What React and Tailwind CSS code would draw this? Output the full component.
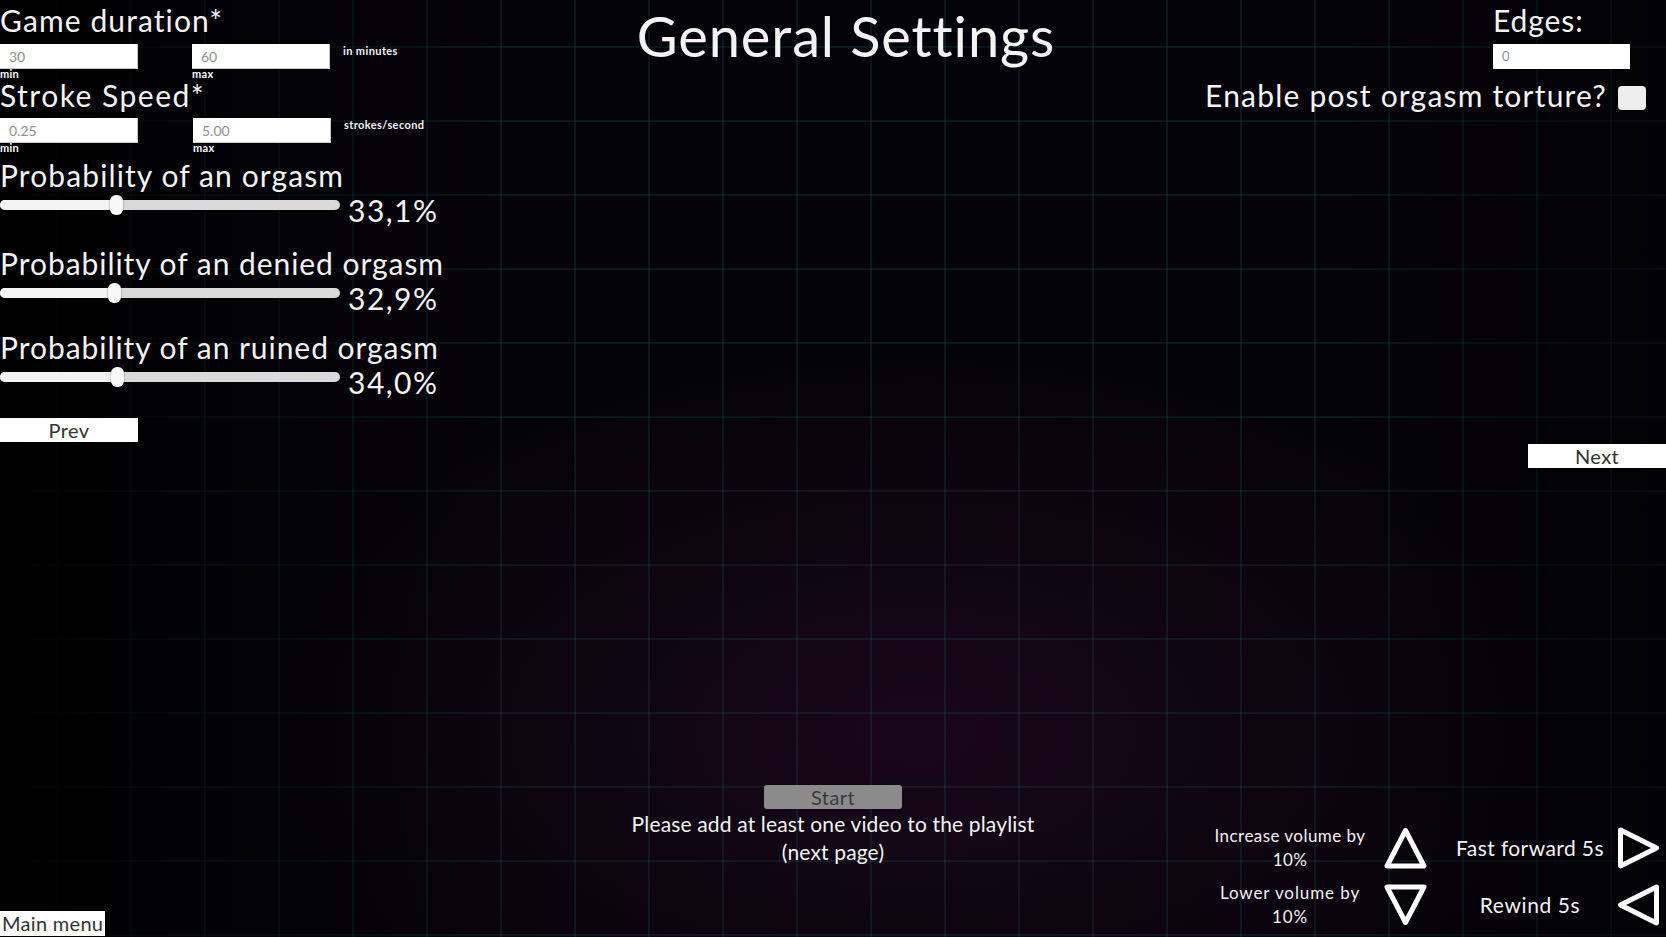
import React from "react";

function Field({ value, label, className = "" }) {
  return (
    <div className={`flex w-[138px] flex-col ${className}`}>
      <input
        readOnly
        placeholder={value}
        className="h-[25px] w-full border-b border-r border-[#c8c8c8] bg-white pl-[9px] text-[14px] leading-[25px] text-[#333] outline-none placeholder:text-[#8f8f8f]"
      />
      <span className="text-[11px] font-bold leading-[10px] tracking-[0.3px] text-white">{label}</span>
    </div>
  );
}

function Slider({ pos, value }) {
  return (
    <div className="flex h-[32px] items-start">
      <div className="relative mt-[4px] h-[20px] w-[340px]">
        <div className="absolute left-0 right-0 top-[5px] h-[10px] rounded-full bg-[#dadada]" />
        <div
          className="absolute left-0 top-[5px] h-[10px] rounded-full bg-[#f3f3f3]"
          style={{ width: pos + 6 }}
        />
        <div
          className="absolute top-0 h-[20px] w-[13px] rounded-[6px] bg-[#f8f8f8] shadow-[0_0_2px_rgba(0,0,0,0.5)]"
          style={{ left: pos }}
        />
      </div>
      <span className="ml-[8px] whitespace-nowrap pt-[3px] text-[30px] leading-[32px] tracking-[1.5px]">{value}</span>
    </div>
  );
}

function Tri({ dir, className = "" }) {
  const pts = {
    up: "21.5,3.5 40,39 3,39",
    down: "3,3 40,3 21.5,38.5",
    right: "3.5,3 39.5,21 3.5,39",
    left: "39.5,3 3.5,21 39.5,39",
  }[dir];
  return (
    <svg width="43" height="42" viewBox="0 0 43 42" className={`shrink-0 ${className}`}>
      <polygon points={pts} fill="none" stroke="#ffffff" strokeWidth="5" strokeLinejoin="round" />
    </svg>
  );
}

export default function App() {
  return (
    <div className="relative h-[937px] w-full overflow-hidden bg-[#05030a] font-[Lato,sans-serif] text-[#f3f3f3]">
      <div className="pointer-events-none absolute inset-0 bg-[radial-gradient(ellipse_55%_55%_at_55%_78%,rgba(38,10,36,0.6),transparent_72%)]" />
      <div className="pointer-events-none absolute inset-0 bg-[linear-gradient(to_right,rgba(35,130,125,0.15)_2px,transparent_2px),linear-gradient(to_bottom,rgba(35,130,125,0.15)_2px,transparent_2px)] bg-size-[74px_74px] bg-position-[56px_46px]" />
      <div className="pointer-events-none absolute inset-0 bg-[linear-gradient(to_right,#000_0%,rgba(0,0,0,0.7)_8%,transparent_30%,transparent_80%,rgba(0,0,0,0.55)_100%)]" />

      <div className="relative flex h-full flex-col">
        <div className="grid grid-cols-[485px_1fr_459px] items-start">
          {/* left column */}
          <div className="flex flex-col items-start pt-[4px]">
            <div className="whitespace-nowrap text-[30px] leading-[32px] tracking-[1.1px]">Game duration*</div>
            <div className="mt-[8px] flex items-start">
              <Field value="30" label="min" />
              <Field value="60" label="max" className="ml-[54px]" />
              <span className="ml-[13px] mt-[1px] whitespace-nowrap text-[11px] font-bold leading-[12px] tracking-[0.4px]">in minutes</span>
            </div>
            <div className="whitespace-nowrap text-[30px] leading-[32px] tracking-[1.5px]">Stroke Speed*</div>
            <div className="mt-[7px] flex items-start">
              <Field value="0.25" label="min" />
              <Field value="5.00" label="max" className="ml-[55px]" />
              <span className="ml-[13px] mt-[1px] whitespace-nowrap text-[11px] font-bold leading-[12px] tracking-[0.4px]">strokes/second</span>
            </div>
            <div className="mt-[6px] whitespace-nowrap text-[30px] leading-[32px] tracking-[1.1px]">Probability of an orgasm</div>
            <Slider pos={110} value="33,1%" />
            <div className="mt-[24px] whitespace-nowrap text-[30px] leading-[32px] tracking-[0.95px]">Probability of an denied orgasm</div>
            <Slider pos={108} value="32,9%" />
            <div className="mt-[20px] whitespace-nowrap text-[30px] leading-[32px] tracking-[0.95px]">Probability of an ruined orgasm</div>
            <Slider pos={111} value="34,0%" />
            <button className="mt-[23px] h-[24px] w-[138px] bg-white text-[20px] leading-[24px] tracking-[0.4px] text-[#333]">Prev</button>
          </div>

          {/* title */}
          <h1 className="whitespace-nowrap pt-[2px] text-center text-[56px] font-normal leading-[68px] tracking-[0.9px]">General Settings</h1>

          {/* right column */}
          <div className="flex flex-col items-end pt-[4px]">
            <div className="mr-[36px] flex w-[137px] flex-col">
              <div className="whitespace-nowrap text-[30px] leading-[32px] tracking-[0.9px]">Edges:</div>
              <input
                readOnly
                placeholder="0"
                className="mt-[8px] h-[25px] w-full bg-white pl-[9px] text-[13px] leading-[25px] outline-none placeholder:text-[#8f8f8f]"
              />
            </div>
            <div className="mr-[20px] mt-[10px] flex items-start gap-[11px]">
              <span className="whitespace-nowrap text-[30px] leading-[32px] tracking-[1.2px]">Enable post orgasm torture?</span>
              <span className="mt-[7px] h-[24px] w-[28px] rounded-[4px] bg-[#ededed]" />
            </div>
            <button className="mt-[333px] h-[24px] w-[138px] bg-white text-[20px] leading-[24px] tracking-[0.4px] text-[#333]">Next</button>
          </div>
        </div>

        <div className="flex-1" />

        <div className="grid h-[152px] grid-cols-[1fr_auto_1fr]">
          <div className="self-end">
            <button className="h-[25px] bg-white px-[2px] text-[20px] leading-[25px] tracking-[0.3px] text-[#333]">Main menu</button>
          </div>
          <div className="flex flex-col items-center">
            <button className="h-[24px] w-[138px] rounded-[3px] bg-[#8b8b8b] text-[20px] leading-[24px] tracking-[0.4px] text-[#3a3a3a]">Start</button>
            <p className="mt-[1px] whitespace-nowrap text-center text-[21px] leading-[28px] tracking-[0.15px]">
              Please add at least one video to the playlist
              <br />
              (next page)
            </p>
          </div>
          <div className="mb-[8px] mr-[6px] flex flex-col gap-[9px] self-end justify-self-end">
            <div className="flex h-[48px] items-center">
              <div className="w-[164px] whitespace-nowrap text-center text-[17px] leading-[24px] tracking-[0.45px]">
                Increase volume by
                <br />
                10%
              </div>
              <Tri dir="up" className="ml-[12px]" />
              <div className="ml-[20px] w-[166px] whitespace-nowrap text-center text-[21px] leading-[24px] tracking-[0.4px]">Fast forward 5s</div>
              <Tri dir="right" className="ml-[4px]" />
            </div>
            <div className="flex h-[48px] items-center">
              <div className="w-[164px] whitespace-nowrap text-center text-[17px] leading-[24px] tracking-[0.9px]">
                Lower volume by
                <br />
                10%
              </div>
              <Tri dir="down" className="ml-[12px]" />
              <div className="ml-[20px] w-[166px] whitespace-nowrap text-center text-[21px] leading-[24px] tracking-[0.6px]">Rewind 5s</div>
              <Tri dir="left" className="ml-[4px]" />
            </div>
          </div>
        </div>
      </div>
    </div>
  );
}
